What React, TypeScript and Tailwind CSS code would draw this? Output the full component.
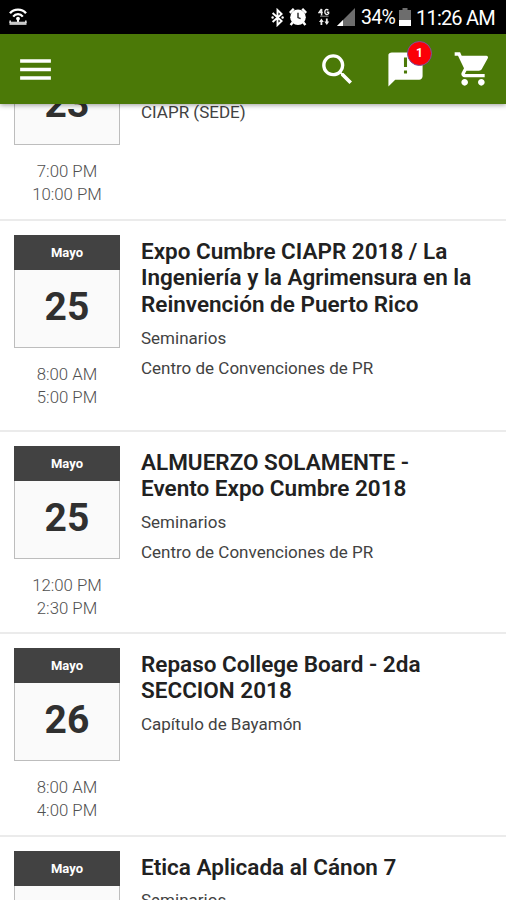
import { MdMenu, MdSearch, MdShoppingCart } from "react-icons/md";

interface EventItem {
  month: string;
  day: string;
  start: string;
  end: string;
  title: string[];
  details: string[];
  height: string;
}

const EVENTS: EventItem[] = [
  {
    month: "Mayo",
    day: "25",
    start: "8:00 AM",
    end: "5:00 PM",
    title: ["Expo Cumbre CIAPR 2018 / La", "Ingeniería y la Agrimensura en la", "Reinvención de Puerto Rico"],
    details: ["Seminarios", "Centro de Convenciones de PR"],
    height: "h-[211px]",
  },
  {
    month: "Mayo",
    day: "25",
    start: "12:00 PM",
    end: "2:30 PM",
    title: ["ALMUERZO SOLAMENTE -", "Evento Expo Cumbre 2018"],
    details: ["Seminarios", "Centro de Convenciones de PR"],
    height: "h-[202px]",
  },
  {
    month: "Mayo",
    day: "26",
    start: "8:00 AM",
    end: "4:00 PM",
    title: ["Repaso College Board - 2da", "SECCION 2018"],
    details: ["Capítulo de Bayamón"],
    height: "h-[203px]",
  },
  {
    month: "Mayo",
    day: "",
    start: "",
    end: "",
    title: ["Etica Aplicada al Cánon 7"],
    details: ["Seminarios"],
    height: "h-[203px]",
  },
];

function HotspotIcon() {
  return (
    <svg className="w-[18px] h-[18px]" viewBox="0 0 18 18" fill="none" stroke="#fff">
      <path d="M1 5.2C5 .4 13 .4 17 5.2" strokeWidth="2.4" />
      <path d="M4.2 8.6c2.4-3.2 7.2-3.2 9.6 0" strokeWidth="2.2" />
      <circle cx="9" cy="10.6" r="1.9" fill="#fff" stroke="none" />
      <path d="M9 11v3" strokeWidth="2" />
      <path d="M.5 15.3h17" stroke="#c8c8c8" strokeWidth="3.2" />
      <path d="M1.2 12.6v2.4M16.8 12.6v2.4" stroke="#ddd" strokeWidth="1.6" />
    </svg>
  );
}

function BluetoothIcon() {
  return (
    <svg className="w-[13px] h-[19px]" viewBox="0 0 13 19" fill="none" stroke="#fff" strokeWidth="1.9">
      <path d="M1.6 5 10.6 13 6.5 17V2l4.1 4-9 8" />
      <circle cx="1.6" cy="9.5" r="1.2" fill="#fff" stroke="none" />
      <circle cx="11.6" cy="9.5" r="1.2" fill="#fff" stroke="none" />
    </svg>
  );
}

function AlarmIcon() {
  return (
    <svg className="w-[18px] h-[18px]" viewBox="0 0 18 18" fill="none" stroke="#fff">
      <circle cx="9" cy="9.2" r="7.8" fill="#fff" stroke="none" />
      <path d="M.8 4.8 4.8.8M17.2 4.8l-4-4M3.8 14.2 1.6 17M14.2 14.2l2.2 2.8" strokeWidth="2.4" />
      <path d="M9 4.8v4.8l2.6 1" stroke="#222" strokeWidth="1.4" />
    </svg>
  );
}

function DataIcon() {
  return (
    <svg className="w-[12px] h-[18px]" viewBox="0 0 12 18" fill="none" stroke="#eee">
      <path d="M3.6 1 1.2 4.4h3.6M3.6 1v6.4" strokeWidth="1.5" />
      <path d="M10.4 2.2C8.6.6 6.8 1.8 6.8 4s2.2 3.4 3.8 1.6V4.2H8.8" strokeWidth="1.4" />
      <path d="M2 8.2h8.6" stroke="#888" />
      <path d="M1 14h4.8l-2.4-3.6zM6.4 13.4h4.8L8.8 17z" fill="#eee" stroke="none" />
      <path d="M3.4 13v4M8.8 10.4v4" strokeWidth="1.8" />
    </svg>
  );
}

function MessageIcon() {
  return (
    <svg className="w-[41px] h-[41px]" viewBox="0 0 24 24" fill="currentColor">
      <path
        fillRule="evenodd"
        d="M20 2H4c-1.1 0-2 .6-2 1.4V22l4-4h14c1.1 0 2-.9 2-2V4c0-1.1-.9-2-2-2zM11.1 5h1.8v5.6h-1.8zM11.1 12.6h1.8v1.8h-1.8z"
      />
    </svg>
  );
}

function StatusBar() {
  return (
    <div className="h-[34px] shrink-0 bg-black text-white flex items-center pl-[9px] pr-[10px]">
      <HotspotIcon />
      <div className="ml-auto flex items-center">
        <BluetoothIcon />
        <span className="ml-[5px]"><AlarmIcon /></span>
        <span className="ml-[11px]"><DataIcon /></span>
        <svg className="w-[18px] h-[18px] ml-[7px]" viewBox="0 0 18 18">
          <path d="M18 0v18H0z" fill="#6d6d6d" />
          <path d="M6 12v6H0z" fill="#fff" />
        </svg>
        <span className="w-[34px] ml-[6px] text-[19.5px] leading-[34px] tracking-[-0.7px] pt-[2px] whitespace-nowrap">34%</span>
        <svg className="w-[12px] h-[18px] ml-[4px]" viewBox="0 0 12 18">
          <path d="M3.5 0h5v2H12v16H0V2h3.5z" fill="#6d6d6d" />
          <path d="M0 12h12v6H0z" fill="#fff" />
        </svg>
        <span className="w-[79px] ml-[5px] mr-[1px] text-[20px] leading-[34px] tracking-[-0.8px] pt-[2px] whitespace-nowrap">11:26 AM</span>
      </div>
    </div>
  );
}

function Header() {
  return (
    <header className="h-[70px] shrink-0 bg-[#4b7907] text-white flex items-center pl-[15px] pr-[13px] relative z-10 shadow-[0_1px_5px_rgba(0,0,0,0.4)]">
      <button aria-label="Menú">
        <MdMenu className="w-[41px] h-[41px]" />
      </button>
      <div className="ml-auto flex items-center gap-[27px]">
        <button aria-label="Buscar">
          <MdSearch className="w-[41px] h-[41px]" />
        </button>
        <button aria-label="Mensajes" className="relative">
          <MessageIcon />
          <span className="absolute -top-[8px] left-[22px] w-[25px] h-[25px] rounded-full bg-[#fb0007] border border-[#7a52a0] text-[12px] font-bold flex items-center justify-center">
            1
          </span>
        </button>
        <button aria-label="Carrito">
          <MdShoppingCart className="w-[40px] h-[40px]" />
        </button>
      </div>
    </header>
  );
}

/* Tail of the event the list is scrolled past; only its lower part is in view */
function ScrolledEvent() {
  return (
    <li className="h-[117px] flex items-start pl-[14px] border-b-2 border-[#ebebeb]">
      <div className="w-[106px] shrink-0 text-center">
        <div className="h-[41px] border border-t-0 border-[#bdbdbd] bg-[#fafafa] text-[39px] font-bold leading-[0px] text-[#303030]">23</div>
        <Times start="7:00 PM" end="10:00 PM" />
      </div>
      <p className="ml-[21px] -mt-[7px] text-[17px] leading-[30px] text-[#424242]">CIAPR (SEDE)</p>
    </li>
  );
}

function Times({ start, end }: { start: string; end: string }) {
  return (
    <div className="mt-[14.5px] text-[16.8px] leading-[23.3px] font-light text-[#505050]">
      <p>{start}</p>
      <p>{end}</p>
    </div>
  );
}

function EventRow({ event }: { event: EventItem }) {
  return (
    <li className={`${event.height} flex items-start pt-[14px] pl-[14px] border-b-2 border-[#ebebeb]`}>
      <div className="w-[106px] shrink-0 text-center">
        <div className="h-[113px] border border-[#bdbdbd] bg-[#fafafa]">
          <div className="h-[35px] -mx-px -mt-px bg-[#424242] text-white text-[13px] font-bold leading-[36px]">{event.month}</div>
          <div className="text-[39px] font-bold leading-[74px] text-[#303030]">{event.day}</div>
        </div>
        <Times start={event.start} end={event.end} />
      </div>
      <div className="ml-[21px] whitespace-nowrap">
        <h2 className="mt-[2.5px] text-[22.5px] leading-[26.9px] font-semibold text-[#212121]">
          {event.title.map((line) => (
            <span key={line} className="block">{line}</span>
          ))}
        </h2>
        <div className="mt-[5px] text-[17px] leading-[30px] text-[#424242]">
          {event.details.map((line) => (
            <p key={line}>{line}</p>
          ))}
        </div>
      </div>
    </li>
  );
}

export default function App() {
  return (
    <div className="w-[506px] h-[900px] overflow-hidden flex flex-col bg-white font-['Roboto',sans-serif]">
      <StatusBar />
      <Header />
      <main className="flex-1 min-h-0 overflow-hidden">
        <ul>
          <ScrolledEvent />
          {EVENTS.map((event, i) => (
            <EventRow key={i} event={event} />
          ))}
        </ul>
      </main>
    </div>
  );
}
